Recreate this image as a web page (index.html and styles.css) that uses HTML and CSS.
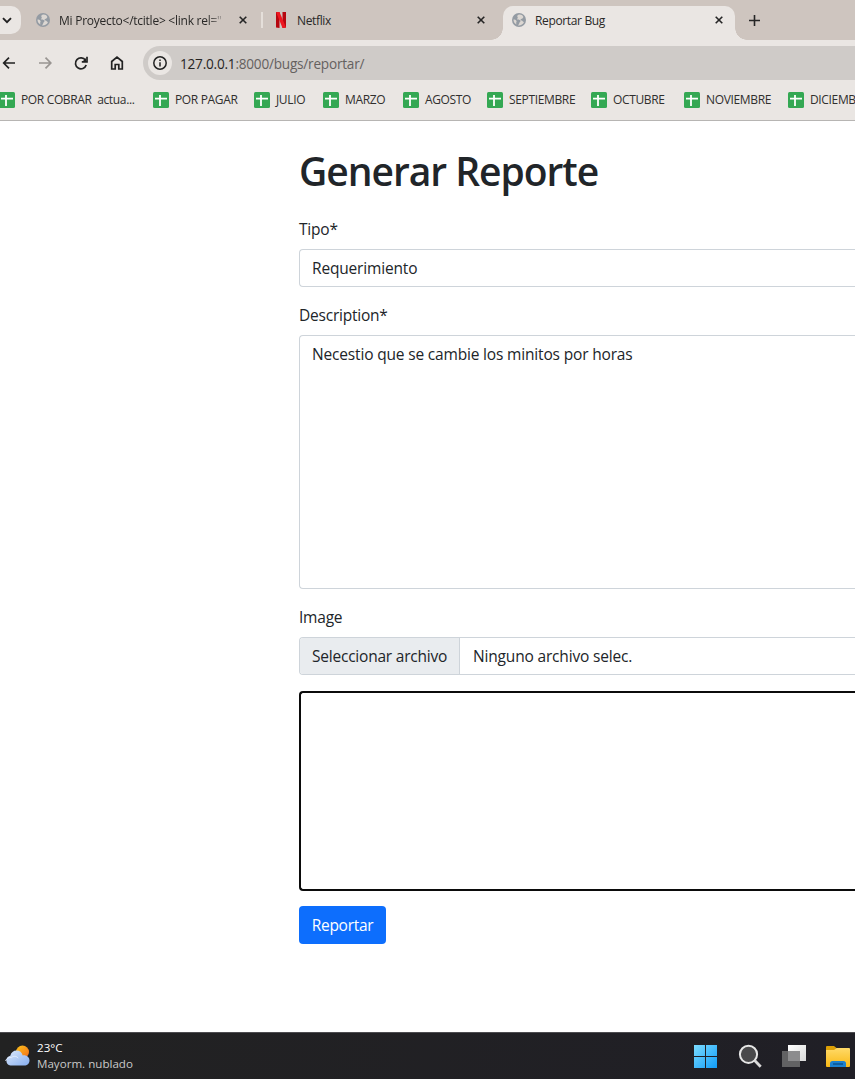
FILE: index.html
```html
<!DOCTYPE html>
<html lang="es">
<head>
<meta charset="utf-8">
<title>Reportar Bug</title>
<link rel="stylesheet" href="styles.css">
</head>
<body>
<svg width="0" height="0" class="defs" aria-hidden="true">
  <symbol id="globe" viewBox="0 0 14 14"><circle cx="7" cy="7" r="7" fill="#949ba3"/><path d="M7.600 1.600C5.500 1.800 4.800 3 5.500 3.900c1 .8-.7 1.500-.3 2.300.6.900 2.700.3 3.300 1.300.4 1-.9 1.400-1.100 2.300-.1.900-.6 1.800-1.400 2.600 2.600.3 5.300-1.200 6-3.500-1.300-.1-1.300-1.300-2.500-1.500C8 7 8.500 5.900 9.900 5.700c.8-.1 1.100-.9 1.500-1.700C10.500 2.300 9.200 1.500 7.600 1.600zM1.500 6.600c1.100 0 2.500.5 3 1.400.4.800-.5 1.200-.3 2.200l.2 1.300C2.500 10.500 1.400 8.800 1.500 6.600z" fill="#dcd7d2"/></symbol>
  <symbol id="close" viewBox="0 0 8 8"><path d="M.7.7l6.600 6.600M7.300.7L.7 7.300" stroke="#252525" stroke-width="1.600"/></symbol>
  <symbol id="sheet" viewBox="0 0 16 16"><rect width="16" height="16" rx="1.500" fill="#34a853"/><path d="M2 6.700h12M7 3v11" stroke="#fff" stroke-width="1.800"/></symbol>
</svg>
<header class="browser">
  <div class="tabstrip">
    <div class="tabsearch"><svg width="10" height="7" viewBox="0 0 10 7"><path d="M1 1.200l4 4 4-4" fill="none" stroke="#222" stroke-width="1.900"/></svg></div>
    <div class="tab first"><svg class="favicon"><use href="#globe"/></svg><span class="title fade">Mi Proyecto&lt;/tcitle&gt; &lt;link rel="</span><svg class="x"><use href="#close"/></svg></div>
    <i class="divider"></i>
    <div class="tab second"><svg class="netflix" viewBox="0 0 10 16"><path d="M0 0h3.500v16L0 15.600zM6.500 0H10v15.600L6.500 16z" fill="#b60710"/><path d="M0 0h3.500L10 15.600 6.500 16z" fill="#ee1720"/></svg><span class="title">Netflix</span><svg class="x"><use href="#close"/></svg></div>
    <div class="tab active"><svg class="favicon"><use href="#globe"/></svg><span class="title">Reportar Bug</span><svg class="x"><use href="#close"/></svg></div>
    <svg class="plus" width="11" height="11" viewBox="0 0 11 11"><path d="M5.500 0v11M0 5.500h11" stroke="#252525" stroke-width="1.600"/></svg>
  </div>
  <div class="toolbar">
    <svg class="nav" width="130" height="16" viewBox="0 0 130 16" fill="none" stroke="#222" stroke-width="1.700">
      <path d="M15 8H4M9 2.700L3.700 8 9 13.300"/>
      <path d="M39 8h11M45.500 2.700L50.800 8l-5.300 5.300" stroke="#999592"/>
      <path d="M85.500 5.200A5.500 5.500 0 1 0 86.200 10"/><path d="M87 1.700v5.200h-5.200"/><path d="M83 5.900h3V3z" fill="#222" stroke="none"/>
      <path d="M111.700 14V6.500L117 2l5.300 4.500V14h-3.500V9.500h-3.600V14z"/>
    </svg>
    <div class="omnibox">
      <span class="info"><svg width="14" height="14" viewBox="0 0 14 14"><circle cx="7" cy="7" r="6.200" fill="none" stroke="#222" stroke-width="1.500"/><path d="M7 6.300v4.200M7 3.400V5" stroke="#222" stroke-width="1.500"/></svg></span>
      <span class="url"><b>127.0.0.1</b>:8000/bugs/reportar/</span>
    </div>
  </div>
  <nav class="bookmarks">
    <a class="w154"><svg><use href="#sheet"/></svg><span>POR COBRAR&nbsp; actua...</span></a>
    <a class="w101"><svg><use href="#sheet"/></svg><span>POR PAGAR</span></a>
    <a class="w69"><svg><use href="#sheet"/></svg><span>JULIO</span></a>
    <a class="w80"><svg><use href="#sheet"/></svg><span>MARZO</span></a>
    <a class="w84"><svg><use href="#sheet"/></svg><span>AGOSTO</span></a>
    <a class="w104"><svg><use href="#sheet"/></svg><span>SEPTIEMBRE</span></a>
    <a class="w93"><svg><use href="#sheet"/></svg><span>OCTUBRE</span></a>
    <a class="w104"><svg><use href="#sheet"/></svg><span>NOVIEMBRE</span></a>
    <a class="last"><svg><use href="#sheet"/></svg><span>DICIEMB</span></a>
  </nav>
</header>
<main class="page">
  <h1>Generar Reporte</h1>
  <div class="label">Tipo*</div>
  <div class="control">Requerimiento</div>
  <div class="label">Description*</div>
  <div class="control area">Necestio que se cambie los minitos por horas</div>
  <div class="label">Image</div>
  <div class="control file"><div class="choose">Seleccionar archivo</div><span>Ninguno archivo selec.</span></div>
  <div class="preview"></div>
  <button class="submit">Reportar</button>
</main>
<footer class="taskbar">
  <svg class="weather" width="26" height="22" viewBox="0 0 26 22">
    <defs><linearGradient id="sun" x2="1" y2="1"><stop stop-color="#fcc419"/><stop offset="1" stop-color="#f26b1d"/></linearGradient><linearGradient id="cloud" x2="1" y2="1"><stop stop-color="#dce9fb"/><stop offset="1" stop-color="#86aef0"/></linearGradient></defs>
    <circle cx="17.500" cy="7" r="6.500" fill="url(#sun)"/>
    <path d="M5.500 20.500a5 5 0 0 1-.2-9.800C6 7.500 8.500 5.500 11.500 5.500c3.200 0 5.600 2 6.200 4.900 3.600-.6 6.800 1.700 6.800 5 0 3-2.300 5.100-5.300 5.100z" fill="url(#cloud)"/>
    <path d="M.6 16c.8-2.700 3.500-4.200 6-3.400 1.400-1.700 4.700-2 6.600.6" fill="none" stroke="#e8f1ff" stroke-width=".9"/>
  </svg>
  <div class="forecast"><span class="temp">23°C</span><span class="sky">Mayorm. nublado</span></div>
  <svg class="apps" width="161" height="28" viewBox="0 0 161 28">
    <defs>
      <linearGradient id="win" x2="1" y2="1"><stop stop-color="#7cdcff"/><stop offset="1" stop-color="#109cf8"/></linearGradient>
      <linearGradient id="sq" x2="1" y2="1"><stop stop-color="#fff"/><stop offset="1" stop-color="#d8d8d8"/></linearGradient>
      <linearGradient id="fold" x2="0" y2="1"><stop stop-color="#ffda68"/><stop offset="1" stop-color="#f9b915"/></linearGradient>
    </defs>
    <path d="M0 3h11v11H0zM12 3h11v11H12zM0 15h11v11H0zM12 15h11v11H12z" fill="url(#win)"/>
    <circle cx="54.500" cy="12.300" r="8.600" fill="#49494b" stroke="#e6e6e6" stroke-width="2"/><path d="M60.700 18.500l6 6.300" stroke="#dadada" stroke-width="2.800"/>
    <path d="M94 3h18v16H94z" fill="url(#sq)"/><path d="M88 9h18v16H88z" fill="#626264"/><path d="M94 9h12v10H94z" fill="#8c8c8e"/>
    <path d="M132 5q0-1 1-1h7l2.500 2-2.500 3h-8z" fill="#dda006"/><path d="M132 8h8l2.500-2H155q1 0 1 1v17q0 1-1 1h-22q-1 0-1-1z" fill="url(#fold)"/>
    <path d="M136 25v-3.500q0-2.500 2.500-2.500h11q2.500 0 2.500 2.500V25z" fill="#1b80cf"/><path d="M139 22h10" stroke="#08477e" stroke-width="1.200"/>
  </svg>
</footer>
</body>
</html>
```

FILE: styles.css
```css
* { box-sizing: border-box; }
body { margin: 0; width: 855px; height: 1079px; overflow: hidden; display: flex; flex-direction: column; background: #fff; color: #212529; font-family: "Open Sans", "Noto Sans", sans-serif; }
.defs { position: absolute; }
svg { display: block; flex: none; }
span { white-space: nowrap; }
.browser { height: 121px; flex: none; background: #eae6e3; border-bottom: 1px solid #b7b5b3; }
.tabstrip { height: 40px; background: #cec5bf; display: flex; align-items: center; }
.tabsearch { width: 21px; height: 28px; background: #eae6e3; border-radius: 0 10px 10px 0; display: flex; align-items: center; padding-left: 2px; flex: none; }
.tab { display: flex; align-items: center; height: 34px; flex: none; font-size: 12px; letter-spacing: -0.35px; }
.first { width: 240px; padding-left: 15px; }
.second { width: 241px; padding-left: 14px; }
.active { position: relative; width: 232px; background: #eae6e3; border-radius: 10px 10px 0 0; align-self: flex-end; padding: 0 12px 6px 9px; }
.active::before, .active::after { content: ""; position: absolute; bottom: 0; width: 12px; height: 12px; }
.active::before { right: 100%; background: radial-gradient(circle at 0 0, transparent 11.500px, #eae6e3 12px); }
.active::after { left: 100%; background: radial-gradient(circle at 100% 0, transparent 11.500px, #eae6e3 12px); }
.favicon { width: 14px; height: 14px; margin-right: 9px; }
.title { color: #292827; margin-top: 1px; }
.fade { width: 168px; letter-spacing: -0.25px; -webkit-mask-image: linear-gradient(90deg, #000 148px, transparent 168px); }
.x { width: 8px; height: 8px; margin-left: auto; }
.first .x { margin-right: 14px; }
.second .x { margin-right: 18px; }
.divider { width: 2px; height: 16px; background: #e5dfda; flex: none; margin-right: -1px; }
.netflix { width: 10px; height: 16px; margin-right: 11px; }
.plus { margin-left: 14px; }
.toolbar { height: 46px; padding-top: 6px; display: flex; align-items: flex-start; }
.nav { margin: 9px 13px 0 0; }
.omnibox { flex: 1; height: 34px; background: #cfcbc8; border-radius: 17px 0 0 17px; display: flex; align-items: center; padding-left: 5px; }
.info { width: 24px; height: 24px; border-radius: 50%; background: #eae6e3; display: flex; align-items: center; justify-content: center; margin-right: 8px; }
.url { font-size: 13.600px; letter-spacing: -0.220px; color: #65615f; }
.url b { font-weight: 400; color: #252423; }
.bookmarks { display: flex; margin: 6px 0 0 -1px; height: 16px; align-items: center; font-size: 12px; letter-spacing: -0.350px; color: #302f2e; }
.bookmarks a { display: flex; align-items: center; flex: none; }
.bookmarks svg { width: 16px; height: 16px; margin-right: 6px; }
.bookmarks span { line-height: 16px; margin-top: -1px; }
.w154 { width: 154px; } .w101 { width: 101px; } .w69 { width: 69px; } .w80 { width: 80px; } .w84 { width: 84px; } .w104 { width: 104px; } .w93 { width: 93px; }
.last { width: 67px; }
.page { flex: 1; width: 556px; margin-left: 299px; padding-top: 26px; font-size: 15.500px; letter-spacing: -0.170px; }
h1 { margin: 0 0 22px; height: 48px; line-height: 48px; font-size: 39px; font-weight: 600; letter-spacing: -1.030px; }
.label { height: 24px; line-height: 24px; margin-bottom: 8px; letter-spacing: -0.220px; }
.control { height: 38px; border: 1px solid #ced4da; border-right: 0; border-radius: 4px 0 0 4px; padding: 6px 12px; line-height: 24px; margin-bottom: 16px; }
.area { height: 254px; }
.file { display: flex; padding: 0; line-height: 36px; overflow: hidden; }
.choose { width: 160px; background: #e9ecef; border-right: 1px solid #ced4da; padding-left: 12px; margin-right: 13px; letter-spacing: -0.220px; }
.preview { height: 200px; border: 2px solid #0b0b0b; border-right: 0; border-radius: 4px 0 0 4px; margin-bottom: 15px; }
.submit { display: block; width: 87px; height: 38px; border: 0; border-radius: 4px; background: #0d6efd; color: #fff; font: 15.500px "Open Sans", sans-serif; letter-spacing: -0.300px; padding: 0; }
.taskbar { height: 47px; flex: none; border-top: 1px solid #4d4c50; background: linear-gradient(90deg, #222222, #201f26); display: flex; align-items: center; padding-left: 5px; }
.forecast { margin-left: 6px; display: flex; flex-direction: column; width: 657px; font-size: 11.600px; line-height: 16px; color: #c9c9c9; }
.temp { color: #fff; }
```
